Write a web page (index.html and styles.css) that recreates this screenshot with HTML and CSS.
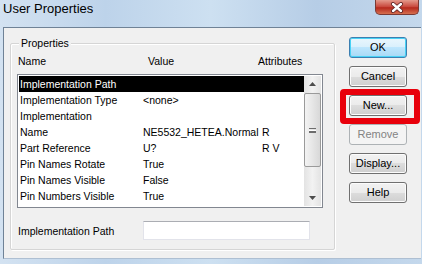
FILE: index.html
```html
<!DOCTYPE html>
<html lang="en">
<head>
    <meta charset="UTF-8">
    <title>User Properties</title>
    <link rel="stylesheet" href="styles.css">
</head>
<body>
    <div class="window">
        <!-- 标题栏 -->
        <div class="titlebar">
            <span class="title">User Properties</span>
            <div class="close">
                <svg width="14" height="11" viewBox="0 0 14 11">
                    <path d="M3 2 L11 9 M11 2 L3 9" stroke="#5a2020" stroke-width="4" stroke-linecap="round"/>
                    <path d="M3 2 L11 9 M11 2 L3 9" stroke="#ffffff" stroke-width="2.4" stroke-linecap="round"/>
                </svg>
            </div>
        </div>
        <div class="client">
            <!-- 属性分组框 -->
            <div class="group">
                <span class="legend">Properties</span>
                <div class="head">
                    <span class="h-name">Name</span>
                    <span class="h-value">Value</span>
                    <span>Attributes</span>
                </div>
                <div class="list">
                    <div class="rows">
                        <div class="row sel"><span class="c-name">Implementation Path</span><span class="c-value"></span><span></span></div>
                        <div class="row"><span class="c-name">Implementation Type</span><span class="c-value">&lt;none&gt;</span><span></span></div>
                        <div class="row"><span class="c-name">Implementation</span><span class="c-value"></span><span></span></div>
                        <div class="row"><span class="c-name">Name</span><span class="c-value">NE5532_HETEA.Normal</span><span>R</span></div>
                        <div class="row"><span class="c-name">Part Reference</span><span class="c-value">U?</span><span>R V</span></div>
                        <div class="row"><span class="c-name">Pin Names Rotate</span><span class="c-value">True</span><span></span></div>
                        <div class="row"><span class="c-name">Pin Names Visible</span><span class="c-value">False</span><span></span></div>
                        <div class="row"><span class="c-name">Pin Numbers Visible</span><span class="c-value">True</span><span></span></div>
                    </div>
                    <div class="scroll">
                        <div class="arrow"><svg width="7" height="4" viewBox="0 0 7 4"><path d="M0 4 L3.5 0 L7 4 Z" fill="#4d4d4d"/></svg></div>
                        <div class="thumb"><span class="grip"></span></div>
                        <div class="track"></div>
                        <div class="arrow"><svg width="7" height="4" viewBox="0 0 7 4"><path d="M0 0 L7 0 L3.5 4 Z" fill="#4d4d4d"/></svg></div>
                    </div>
                </div>
                <div class="path-row">
                    <span class="path-label">Implementation Path</span>
                    <div class="textbox"></div>
                </div>
            </div>
            <!-- 右侧按钮 -->
            <div class="buttons">
                <div class="btn default">OK</div>
                <div class="btn">Cancel</div>
                <div class="btn">New...</div>
                <div class="btn disabled">Remove</div>
                <div class="btn">Display...</div>
                <div class="btn">Help</div>
            </div>
        </div>
        <!-- 红色标注框 -->
        <div class="mark"></div>
    </div>
</body>
</html>
```

FILE: styles.css
```css
body{
    margin: 0;
    width: 422px;
    height: 264px;
    overflow: hidden;
    font-family: "Liberation Sans", Arial, sans-serif;
    font-size: 10.5px;
    color: #000;
}
.window{
    position: relative;
    height: 264px;
    display: flex;
    flex-direction: column;
    padding: 0 1px 5px 3px;
    box-sizing: border-box;
    background: linear-gradient(90deg, #d3e2f1 0%, #bdd3ea 25%, #cde0f1 50%, #b6cde6 75%, #c4d8ec 100%);
}
/* 标题栏 */
.titlebar{
    height: 27px;
    display: flex;
    align-items: flex-start;
}
.title{
    font-size: 13px;
    line-height: 16px;
    padding-top: 1px;
    color: #000;
}
.close{
    margin-left: auto;
    margin-right: 2px;
    width: 44px;
    height: 15px;
    box-sizing: border-box;
    border: 1px solid #7a3a34;
    border-top: none;
    border-radius: 0 0 5px 5px;
    background: linear-gradient(#e49a8c, #c8463a 50%, #b5281c 55%, #d6704f);
    display: flex;
    align-items: center;
    justify-content: center;
}
/* 客户区 */
.client{
    flex: 1;
    display: flex;
    align-items: flex-start;
    background: #f0f0f0;
    border-top: 1px solid #6f8296;
    border-left: 1px solid #6f8296;
    border-bottom: 1px solid #aebfd2;
    padding: 9px 0 0 6px;
}
.group{
    position: relative;
    margin-top: 6px;
    width: 325px;
    height: 207px;
    box-sizing: border-box;
    border: 1px solid #d5d5d5;
    box-shadow: inset 1px 1px 0 #fff, 1px 1px 0 #fff;
    border-radius: 2px;
    padding: 9px 0 0 6px;
}
.legend{
    position: absolute;
    top: -7px;
    left: 8px;
    padding: 0 2px;
    line-height: 13px;
    background: #f0f0f0;
}
.head{
    display: flex;
    line-height: 16px;
    padding-left: 1px;
}
.h-name{
    width: 130px;
}
.h-value{
    width: 110px;
}
/* 列表框 */
.list{
    margin-top: 5px;
    width: 306px;
    height: 134px;
    box-sizing: border-box;
    border: 1px solid #828790;
    padding: 1px;
    background: #fff;
    display: flex;
}
.rows{
    flex: 1;
    overflow: hidden;
}
.row{
    display: flex;
    height: 16px;
    line-height: 16px;
    padding-left: 1px;
    white-space: nowrap;
}
.row.sel{
    background: #000;
    color: #fff;
}
.c-name{
    width: 123px;
}
.c-value{
    width: 119px;
}
.scroll{
    width: 17px;
    display: flex;
    flex-direction: column;
    background: linear-gradient(90deg, #e3e3e3, #f2f2f2 50%, #e3e3e3);
}
.arrow{
    height: 16px;
    display: flex;
    align-items: center;
    justify-content: center;
}
.thumb{
    height: 74px;
    margin: 1px 0 0 0;
    box-sizing: border-box;
    border: 1px solid #9a9a9a;
    border-radius: 2px;
    background: linear-gradient(90deg, #f3f3f3, #e6e6e6 50%, #d8d8d8);
    display: flex;
    align-items: center;
    justify-content: center;
}
.grip{
    width: 7px;
    height: 5px;
    border-top: 1px solid #6d6d6d;
    border-bottom: 1px solid #6d6d6d;
    box-sizing: border-box;
    background: linear-gradient(#fff 0, #fff 1px, #6d6d6d 1px, #6d6d6d 2px, #fff 2px);
    background-size: 100% 2px;
    background-position: 0 1px;
    background-repeat: no-repeat;
}
.track{
    flex: 1;
}
/* 底部文本框 */
.path-row{
    display: flex;
    align-items: center;
    margin-top: 13px;
    padding-left: 1px;
}
.path-label{
    width: 125px;
}
.textbox{
    width: 167px;
    height: 19px;
    box-sizing: border-box;
    background: #fff;
    border: 1px solid #e2e3ea;
    border-top-color: #abadb3;
}
/* 按钮 */
.buttons{
    margin-left: 14px;
    width: 58px;
    display: flex;
    flex-direction: column;
    gap: 8px;
}
.btn{
    height: 21px;
    box-sizing: border-box;
    border: 1px solid #707070;
    border-radius: 3px;
    background: linear-gradient(#f2f2f2, #ebebeb 50%, #dddddd 50%, #cfcfcf);
    box-shadow: inset 0 0 0 1px #fcfcfc;
    text-align: center;
    line-height: 19px;
    font-size: 11px;
}
.btn.default{
    border-color: #3c7fb1;
    box-shadow: inset 0 0 0 1px #48d2f5;
    background: linear-gradient(#eaf6fd, #d9f0fc 50%, #bee6fd 50%, #a7d9f5);
}
.btn.disabled{
    border-color: #adb2b5;
    background: #f4f4f4;
    box-shadow: none;
    color: #838383;
}
/* 红框标注 */
.mark{
    position: absolute;
    left: 340px;
    top: 89px;
    width: 80px;
    height: 35px;
    box-sizing: border-box;
    border: 6px solid #e8000b;
    border-radius: 4px;
}
```
